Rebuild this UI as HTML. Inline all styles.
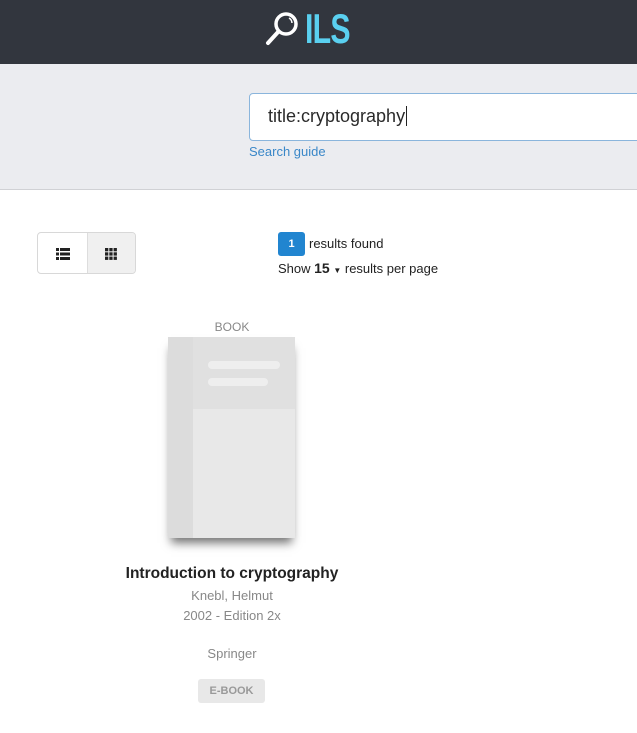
<!DOCTYPE html>
<html><head><style>
*{margin:0;padding:0;box-sizing:border-box}
body{width:637px;height:733px;overflow:hidden;background:#fff;font-family:"Liberation Sans",sans-serif;position:relative}
.hdr{position:absolute;left:0;top:0;width:637px;height:64px;background:#32363e}
.band{position:absolute;left:0;top:64px;width:637px;height:126px;background:#ebecf0;border-bottom:1px solid #d0d1d5}
.inp{position:absolute;left:249px;top:29px;width:400px;height:48px;background:#fff;border:1px solid #8ab5dc;border-radius:4px;font-size:18px;color:#2a2a2a;padding:12px 0 0 18px}
.abs{position:absolute}
</style></head><body>
<div class="hdr">
<svg class="abs" style="left:263px;top:9px" width="40" height="40" viewBox="0 0 40 40">
<circle cx="23" cy="15" r="10" fill="none" stroke="#fff" stroke-width="3.5"/>
<path d="M15.5 22.5 L5 34" stroke="#fff" stroke-width="4" stroke-linecap="round"/>
<path d="M26 9 a6 6 0 0 1 3 5" stroke="#fff" stroke-width="1.5" fill="none"/>
</svg>
<div class="abs" style="left:305px;top:5px;font-size:42px;font-weight:bold;color:#5ad0f0;letter-spacing:-1px;transform:scaleX(0.72);transform-origin:left">ILS</div>
</div>
<div class="band">
<div class="inp">title:cryptography<span style="border-left:1px solid #222;margin-left:1px"></span></div>
<div class="abs" style="left:249px;top:80px;font-size:13px;color:#3a87c8">Search guide</div>
</div>
<div class="abs" style="left:37px;top:232px;width:99px;height:42px;border:1px solid #d8d8d8;border-radius:4px;overflow:hidden">
<div class="abs" style="left:49px;top:0;width:50px;height:42px;background:#f0f0f0;border-left:1px solid #ddd"></div>
<svg class="abs" style="left:18px;top:15px" width="14" height="12"><rect x="0" y="0" width="3" height="3" fill="#222"/><rect x="4" y="0" width="10" height="3" fill="#222"/><rect x="0" y="4.5" width="3" height="3" fill="#222"/><rect x="4" y="4.5" width="10" height="3" fill="#222"/><rect x="0" y="9" width="3" height="3" fill="#222"/><rect x="4" y="9" width="10" height="3" fill="#222"/></svg>
<svg class="abs" style="left:67px;top:15px" width="12" height="12"><g fill="#222"><rect x="0" y="0" width="3.3" height="3.3"/><rect x="4.3" y="0" width="3.3" height="3.3"/><rect x="8.6" y="0" width="3.3" height="3.3"/><rect x="0" y="4.3" width="3.3" height="3.3"/><rect x="4.3" y="4.3" width="3.3" height="3.3"/><rect x="8.6" y="4.3" width="3.3" height="3.3"/><rect x="0" y="8.6" width="3.3" height="3.3"/><rect x="4.3" y="8.6" width="3.3" height="3.3"/><rect x="8.6" y="8.6" width="3.3" height="3.3"/></g></svg>
</div>
<div class="abs" style="left:278px;top:232px;width:27px;height:24px;background:#2185d0;border-radius:3px;color:#fff;font-size:11px;font-weight:bold;text-align:center;line-height:24px">1</div>
<div class="abs" style="left:309px;top:236px;font-size:13px;color:#222">results found</div>
<div class="abs" style="left:278px;top:260px;font-size:13px;color:#222">Show <b style="font-size:14px">15</b> <span style="font-size:8px">▼</span> results per page</div>
<div class="abs" style="left:110px;top:320px;width:244px;text-align:center;font-size:12px;color:#888">BOOK</div>
<div class="abs" style="left:168px;top:337px;width:127px;height:201px;background:#e8e8e8;box-shadow:0 8px 9px -3px rgba(0,0,0,0.55)">
<div class="abs" style="left:0;top:0;width:25px;height:201px;background:#dcdcdc"></div>
<div class="abs" style="left:25px;top:0;width:102px;height:72px;background:#e0e0e0"></div>
<div class="abs" style="left:40px;top:24px;width:72px;height:8px;background:#eee;border-radius:4px"></div>
<div class="abs" style="left:40px;top:41px;width:60px;height:8px;background:#eee;border-radius:4px"></div>
</div>
<div class="abs" style="left:80px;top:565px;width:304px;text-align:center;font-size:15.5px;font-weight:bold;color:#222">Introduction to cryptography</div>
<div class="abs" style="left:110px;top:586px;width:244px;text-align:center;font-size:13px;color:#888;line-height:20px">Knebl, Helmut<br>2002 - Edition 2x</div>
<div class="abs" style="left:110px;top:646px;width:244px;text-align:center;font-size:13px;color:#888">Springer</div>
<div class="abs" style="left:198px;top:679px;width:67px;height:24px;background:#e8e8e8;border-radius:3px;text-align:center;line-height:24px;font-size:11px;font-weight:bold;color:#999">E-BOOK</div>
</body></html>
